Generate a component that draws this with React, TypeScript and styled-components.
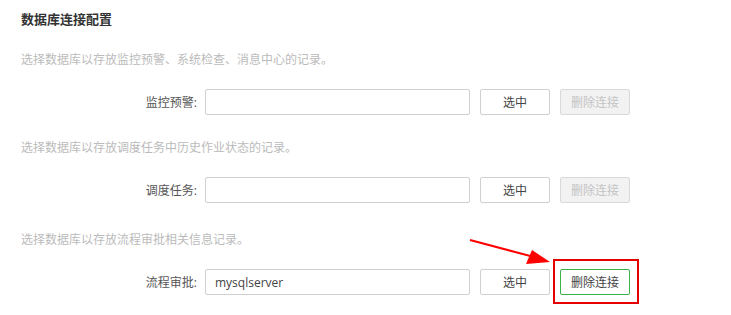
import React from "react";
import styled, { createGlobalStyle } from "styled-components";

const Global = createGlobalStyle`
  html, body { margin: 0; padding: 0; background: #fff; }
  body {
    font-family: "Open Sans", "Noto Sans CJK SC", sans-serif;
    color: #333;
  }
  * { box-sizing: border-box; }
`;

const Page = styled.div`
  position: relative;
  width: 731px;
  height: 315px;
  padding: 9px 0 0 21px;
`;

const Title = styled.h2`
  margin: 0;
  font-size: 13px;
  line-height: 20px;
  font-weight: bold;
  color: #333;
`;

const Section = styled.section<{ $top: number }>`
  margin-top: ${(p) => p.$top}px;
`;

const Desc = styled.p`
  margin: 0;
  font-size: 12px;
  line-height: 20px;
  color: #bbbbbb;
`;

const Row = styled.div`
  display: flex;
  align-items: center;
  margin-top: 19px;
  height: 26px;
`;

const Label = styled.label`
  flex: none;
  width: 184px;
  text-align: right;
  font-size: 12px;
  color: #555;
  padding-right: 8px;
`;

const Input = styled.input`
  flex: none;
  width: 265px;
  height: 26px;
  border: 1px solid #d0d0d0;
  border-radius: 2px;
  padding: 0 9px;
  font-family: "Open Sans", "Noto Sans CJK SC", sans-serif;
  font-size: 12px;
  color: #444;
  outline: none;
  background: #fff;
`;

const Btn = styled.button<{ $variant: "normal" | "disabled" | "active" }>`
  flex: none;
  width: 70px;
  height: 26px;
  margin-left: 10px;
  border-radius: 2px;
  font-family: "Open Sans", "Noto Sans CJK SC", sans-serif;
  font-size: 12px;
  padding: 0;
  cursor: pointer;
  border: 1px solid
    ${(p) =>
      p.$variant === "active" ? "#3cb34a" : p.$variant === "disabled" ? "#d9d9d9" : "#d0d0d0"};
  background: ${(p) => (p.$variant === "disabled" ? "#f2f2f2" : "#fff")};
  color: ${(p) => (p.$variant === "disabled" ? "#c4c4c4" : "#444")};
`;

const Highlight = styled.div`
  position: absolute;
  left: 553px;
  top: 259px;
  width: 86px;
  height: 45px;
  border: 2px solid #e60000;
  pointer-events: none;
`;

const Arrow = styled.svg`
  position: absolute;
  left: 460px;
  top: 230px;
  overflow: visible;
  pointer-events: none;
`;

type RowData = {
  desc: string;
  label: string;
  value: string;
  active: boolean;
  top: number;
};

const rows: RowData[] = [
  { desc: "选择数据库以存放监控预警、系统检查、消息中心的记录。", label: "监控预警:", value: "", active: false, top: 21 },
  { desc: "选择数据库以存放调度任务中历史作业状态的记录。", label: "调度任务:", value: "", active: false, top: 23 },
  { desc: "选择数据库以存放流程审批相关信息记录。", label: "流程审批:", value: "mysqlserver", active: true, top: 27 },
];

export default function App() {
  return (
    <>
      <Global />
      <Page>
        <Title>数据库连接配置</Title>
        {rows.map((r) => (
          <Section key={r.label} $top={r.top}>
            <Desc>{r.desc}</Desc>
            <Row>
              <Label>{r.label}</Label>
              <Input defaultValue={r.value} />
              <Btn $variant="normal">选中</Btn>
              <Btn $variant={r.active ? "active" : "disabled"}>删除连接</Btn>
            </Row>
          </Section>
        ))}
        <Highlight />
        <Arrow width="100" height="40" viewBox="0 0 100 40">
          <line x1="10" y1="10" x2="74" y2="27" stroke="#f00" strokeWidth="2" />
          <polygon points="90,32 66,34 72,20" fill="#f00" />
        </Arrow>
      </Page>
    </>
  );
}
